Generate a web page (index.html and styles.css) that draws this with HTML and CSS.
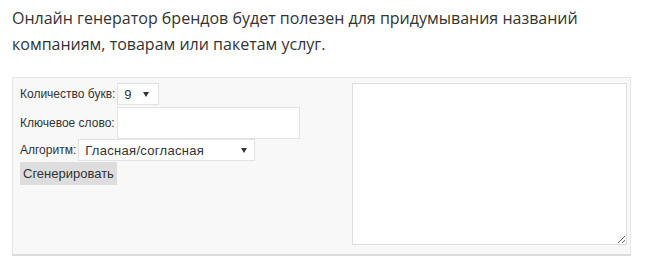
FILE: index.html
```html
<!doctype html>
<html lang="ru">
<head>
    <meta charset="utf-8">
    <title>Генератор брендов</title>
    <link rel="stylesheet" href="styles.css">
</head>
<body>

<div class="page">
    <!-- Вступительный текст -->
    <p class="intro">Онлайн генератор брендов будет полезен для придумывания названий компаниям, товарам или пакетам услуг.</p>

    <!-- Панель генератора -->
    <div class="generator">
        <form class="generator-form">
            <div class="form-row row-letters">
                <label for="letters" class="form-label">Количество букв:</label>
                <select id="letters" class="form-select select-short">
                    <option>9</option>
                </select>
            </div>
            <div class="form-row">
                <label for="keyword" class="form-label">Ключевое слово:</label>
                <input type="text" id="keyword" class="form-input">
            </div>
            <div class="form-row">
                <label for="algorithm" class="form-label">Алгоритм:</label>
                <select id="algorithm" class="form-select select-wide">
                    <option>Гласная/согласная</option>
                </select>
            </div>
            <button type="button" class="form-button">Сгенерировать</button>
        </form>

        <textarea class="result" aria-label="Результат"></textarea>
    </div>
</div>

</body>
</html>
```

FILE: styles.css
```css
body {
    margin: 0;
    background: #fff;
    color: #333;
}

.page {
    padding: 5px 15px 0 12px;
}

/* Вступление */
.intro {
    margin: 0 0 20px;
    font-family: "Open Sans", Arial, sans-serif;
    font-size: 16px;
    line-height: 26px;
    color: #333;
}

/* Серая панель с формой и полем результата */
.generator {
    display: flex;
    justify-content: space-between;
    align-items: flex-start;
    padding: 5px 3px 9px 7px;
    background: #f8f8f8;
    border: 1px solid #e6e6e6;
    border-bottom: 2px solid #dcdcdc;
}

.generator-form {
    display: flex;
    flex-direction: column;
    align-items: flex-start;
    font-family: "Liberation Sans", Arial, sans-serif;
    font-size: 12px;
}

.form-row {
    display: flex;
    align-items: center;
    gap: 2px;
}

.row-letters {
    margin-bottom: 2px;
}

.form-label {
    color: #333;
}

.form-select {
    appearance: none;
    height: 22px;
    margin: 0;
    padding: 0 20px 0 6px;
    font-family: "Liberation Sans", Arial, sans-serif;
    font-size: 13px;
    color: #333;
    background-color: #fff;
    background-image: url("data:image/svg+xml,%3csvg xmlns='http://www.w3.org/2000/svg' viewBox='0 0 6 5'%3e%3cpath fill='%23333' d='M0 0h6L3 5z'/%3e%3c/svg%3e");
    background-repeat: no-repeat;
    background-position: right 9px center;
    background-size: 6px 5px;
    border: 1px solid #e3e3e3;
    border-radius: 0;
}

.select-short {
    width: 42px;
}

.select-wide {
    width: 177px;
    letter-spacing: 0.3px;
    background-position: right 7px center;
}

.form-input {
    width: 183px;
    height: 32px;
    margin: 0;
    padding: 0 5px;
    box-sizing: border-box;
    border: 1px solid #e3e3e3;
    background: #fff;
}

.form-button {
    height: 23px;
    margin-top: 1px;
    padding: 0 3px;
    font-family: "Liberation Sans", Arial, sans-serif;
    font-size: 13px;
    color: #333;
    background: #ddd;
    border: 0;
    border-radius: 0;
}

/* Поле с результатом */
.result {
    width: 275px;
    height: 162px;
    margin: 0;
    padding: 2px;
    box-sizing: border-box;
    background: #fff;
    border: 1px solid #dedede;
    resize: both;
}
```
